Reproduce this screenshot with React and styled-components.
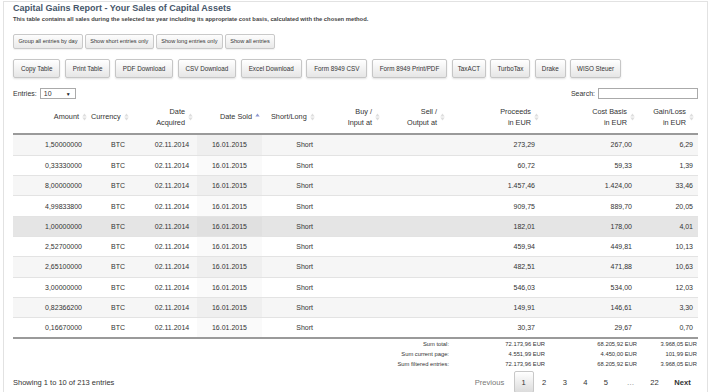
import React from "react";
import styled, { createGlobalStyle } from "styled-components";

const Global = createGlobalStyle`
  html, body { margin: 0; padding: 0; background: #fff; }
  body { font-family: "Liberation Sans", Arial, Helvetica, sans-serif; color: #333; }
  * { box-sizing: border-box; }
`;

const COLS = "77px 50px 57px 65px 68px 55px 65px 95px 95px 57px";

const Panel = styled.div`
  margin: 1px 2px 0 3px;
  min-height: 100vh;
  border: 1px solid #e2e2e2;
  border-bottom: none;
  padding: 0 9px;
`;

const Title = styled.h1`
  margin: 1px 0 0;
  font-size: 9px;
  line-height: 10px;
  font-weight: bold;
  color: #46566a;
`;

const Subtitle = styled.p`
  margin: 3px 0 0;
  font-size: 5.8px;
  line-height: 7px;
  font-weight: bold;
  color: #444;
`;

const FilterBar = styled.div`
  display: flex;
  gap: 2px;
  margin-top: 11px;
`;

const FilterButton = styled.button`
  height: 14.5px;
  padding: 0 4.4px;
  font-family: inherit;
  font-size: 5.6px;
  color: #333;
  background: linear-gradient(#fdfdfd, #e9e9e9);
  border: 1px solid #c9c9c9;
  border-radius: 2px;
  box-shadow: 0 1px 1px rgba(0,0,0,0.06);
`;

const ExportBar = styled.div`
  display: flex;
  gap: 4.4px;
  margin-top: 10px;
`;

const ExportButton = styled.button`
  height: 19px;
  padding: 0 ${(p) => p.$pad || 7}px;
  font-family: inherit;
  font-size: 6.3px;
  color: #333;
  background: linear-gradient(#ffffff, #e6e6e6);
  border: 1px solid #c6c6c6;
  border-radius: 2px;
  box-shadow: 0 1px 2px rgba(0,0,0,0.12);
`;

const Controls = styled.div`
  display: flex;
  justify-content: space-between;
  align-items: center;
  margin-top: 10px;
  height: 12px;
  font-size: 7px;
  color: #333;
`;

const Label = styled.label`
  display: flex;
  align-items: center;
  gap: 3px;
`;

const SelectBox = styled.div`
  width: 36px;
  height: 11px;
  border: 1px solid #aaa;
  background: #fff;
  display: flex;
  align-items: center;
  justify-content: space-between;
  padding: 0 4px 0 3px;
  font-size: 7px;
  span { font-size: 5px; color: #222; }
`;

const SearchInput = styled.input`
  width: 100px;
  height: 11px;
  border: 1px solid #aaa;
  padding: 0;
  margin: 0;
`;

const HeadRow = styled.div`
  display: grid;
  grid-template-columns: ${COLS};
  height: 33px;
  margin-top: 2px;
  border-bottom: 2px solid #9a9a9a;
`;

const HeadCell = styled.div`
  display: flex;
  align-items: center;
  justify-content: ${(p) => p.$just};
  padding: ${(p) => p.$pad};
  font-size: 7.3px;
  line-height: 11.5px;
  color: #333;
  text-align: right;
`;

const SortIcon = styled.svg`
  width: 5px;
  height: 8px;
  margin-left: 3px;
  flex: none;
`;

const Row = styled.div`
  display: grid;
  grid-template-columns: ${COLS};
  height: 20.3px;
  border-top: ${(p) => (p.$first ? "none" : "1px solid #e3e3e3")};
  background: ${(p) => p.$bg};
`;

const Cell = styled.div`
  display: flex;
  align-items: center;
  justify-content: ${(p) => p.$just};
  padding: ${(p) => p.$pad};
  font-size: 7px;
  color: #333;
  background: ${(p) => p.$bg || "transparent"};
  white-space: nowrap;
`;

const TableEnd = styled.div`
  border-top: 2px solid #9a9a9a;
`;

const SumRow = styled.div`
  display: grid;
  grid-template-columns: ${COLS};
  height: 10px;
  font-size: 5.8px;
  color: #333;
`;

const SumLabel = styled.div`
  grid-column: 1 / span 7;
  text-align: right;
  line-height: 10px;
  padding-right: 1px;
`;

const SumValue = styled.div`
  text-align: right;
  line-height: 10px;
  padding-right: ${(p) => p.$pad}px;
  white-space: nowrap;
`;

const BottomBar = styled.div`
  display: flex;
  justify-content: space-between;
  align-items: center;
  height: 24px;
  margin-top: 1px;
`;

const Info = styled.div`
  font-size: 7.5px;
  color: #333;
`;

const Pager = styled.div`
  display: flex;
  align-items: center;
  margin-right: -3px;
`;

const PageItem = styled.span`
  display: flex;
  align-items: center;
  justify-content: center;
  width: ${(p) => p.$w}px;
  height: 22px;
  font-size: 7.6px;
  color: ${(p) => (p.$muted ? "#777" : "#333")};
  font-weight: ${(p) => (p.$bold ? "bold" : "normal")};
  border: 1px solid ${(p) => (p.$current ? "#c8c8c8" : "transparent")};
  border-radius: 2px;
  background: ${(p) => (p.$current ? "linear-gradient(#fff, #dcdcdc)" : "transparent")};
`;

const columns = [
  { w: 77, head: ["Amount"], hJust: "flex-end", hPad: "0 3px 0 0", dJust: "flex-end", dPad: "0 8px 0 0" },
  { w: 50, head: ["Currency"], hJust: "flex-start", hPad: "0 0 0 1px", dJust: "center", dPad: "0 0 0 6px" },
  { w: 57, head: ["Date", "Acquired"], hJust: "flex-end", hPad: "0 4px 0 0", dJust: "center", dPad: "0 0 0 7px" },
  { w: 65, head: ["Date Sold"], sorted: true, hJust: "flex-end", hPad: "0 2px 0 0", dJust: "center", dPad: "0" },
  { w: 68, head: ["Short/Long"], hJust: "flex-start", hPad: "0 0 0 9px", dJust: "flex-end", dPad: "0 17px 0 0" },
  { w: 55, head: ["Buy /", "Input at"], hJust: "flex-end", hPad: "0 5px 0 0", dJust: "flex-end", dPad: "0 5px 0 0" },
  { w: 65, head: ["Sell /", "Output at"], hJust: "flex-end", hPad: "0 5px 0 0", dJust: "flex-end", dPad: "0 5px 0 0" },
  { w: 95, head: ["Proceeds", "in EUR"], hJust: "flex-end", hPad: "0 6px 0 0", dJust: "flex-end", dPad: "0 10px 0 0" },
  { w: 95, head: ["Cost Basis", "in EUR"], hJust: "flex-end", hPad: "0 5px 0 0", dJust: "flex-end", dPad: "0 8px 0 0" },
  { w: 57, head: ["Gain/Loss", "in EUR"], hJust: "flex-end", hPad: "0 3px 0 0", dJust: "flex-end", dPad: "0 4px 0 0" },
];

const data = [
  ["1,50000000", "273,29", "267,00", "6,29"],
  ["0,33330000", "60,72", "59,33", "1,39"],
  ["8,00000000", "1.457,46", "1.424,00", "33,46"],
  ["4,99833800", "909,75", "889,70", "20,05"],
  ["1,00000000", "182,01", "178,00", "4,01"],
  ["2,52700000", "459,94", "449,81", "10,13"],
  ["2,65100000", "482,51", "471,88", "10,63"],
  ["3,00000000", "546,03", "534,00", "12,03"],
  ["0,82366200", "149,91", "146,61", "3,30"],
  ["0,16670000", "30,37", "29,67", "0,70"],
];

const sums = [
  ["Sum total:", "72.173,96 EUR", "68.205,92 EUR", "3.968,05 EUR"],
  ["Sum current page:", "4.551,99 EUR", "4.450,00 EUR", "101,99 EUR"],
  ["Sum filtered entries:", "72.173,96 EUR", "68.205,92 EUR", "3.968,05 EUR"],
];

function Sort({ asc }) {
  return (
    <SortIcon viewBox="0 0 5 8">
      <polygon points="0.3,3.4 2.5,0.4 4.7,3.4" fill={asc ? "#8f98cf" : "#dedede"} />
      {!asc && <polygon points="0.3,4.6 4.7,4.6 2.5,7.6" fill="#dedede" />}
    </SortIcon>
  );
}

export default function App() {
  const filters = ["Group all entries by day", "Show short entries only", "Show long entries only", "Show all entries"];
  const exports = [
    ["Copy Table", 7], ["Print Table", 7], ["PDF Download", 7], ["CSV Download", 7], ["Excel Download", 7],
    ["Form 8949 CSV", 7], ["Form 8949 Print/PDF", 7], ["TaxACT", 5], ["TurboTax", 6], ["Drake", 6], ["WISO Steuer", 6],
  ];
  return (
    <>
      <Global />
      <Panel>
        <Title>Capital Gains Report - Your Sales of Capital Assets</Title>
        <Subtitle>
          This table contains all sales during the selected tax year including its appropriate cost basis, calculated with the chosen method.
        </Subtitle>
        <FilterBar>
          {filters.map((f) => (
            <FilterButton key={f}>{f}</FilterButton>
          ))}
        </FilterBar>
        <ExportBar>
          {exports.map(([e, p]) => (
            <ExportButton key={e} $pad={p}>{e}</ExportButton>
          ))}
        </ExportBar>
        <Controls>
          <Label>
            Entries:
            <SelectBox>
              10<span>▼</span>
            </SelectBox>
          </Label>
          <Label>
            Search:
            <SearchInput type="text" />
          </Label>
        </Controls>
        <HeadRow>
          {columns.map((c, i) => (
            <HeadCell key={i} $just={c.hJust} $pad={c.hPad}>
              <div>
                {c.head.map((l, j) => (
                  <div key={j}>{l}</div>
                ))}
              </div>
              <Sort asc={c.sorted} />
            </HeadCell>
          ))}
        </HeadRow>
        {data.map((r, i) => {
          const odd = i % 2 === 0;
          const hover = i === 4;
          const bg = hover ? "#e5e5e5" : odd ? "#f6f6f6" : "#fff";
          const sortedBg = hover ? "#e0e0e0" : odd ? "#efefef" : "#fafafa";
          const values = [r[0], "BTC", "02.11.2014", "16.01.2015", "Short", "", "", r[1], r[2], r[3]];
          return (
            <Row key={i} $first={i === 0} $bg={bg}>
              {columns.map((c, j) => (
                <Cell key={j} $just={c.dJust} $pad={c.dPad} $bg={c.sorted ? sortedBg : undefined}>
                  {values[j]}
                </Cell>
              ))}
            </Row>
          );
        })}
        <TableEnd />
        {sums.map((s) => (
          <SumRow key={s[0]}>
            <SumLabel>{s[0]}</SumLabel>
            <SumValue $pad={0}>{s[1]}</SumValue>
            <SumValue $pad={3}>{s[2]}</SumValue>
            <SumValue $pad={0}>{s[3]}</SumValue>
          </SumRow>
        ))}
        <BottomBar>
          <Info>Showing 1 to 10 of 213 entries</Info>
          <Pager>
            <PageItem $w={48} $muted>Previous</PageItem>
            <PageItem $w={20} $current>1</PageItem>
            <PageItem $w={21}>2</PageItem>
            <PageItem $w={20.5}>3</PageItem>
            <PageItem $w={20.5}>4</PageItem>
            <PageItem $w={20.5}>5</PageItem>
            <PageItem $w={29} $muted>…</PageItem>
            <PageItem $w={19}>22</PageItem>
            <PageItem $w={37} $bold>Next</PageItem>
          </Pager>
        </BottomBar>
      </Panel>
    </>
  );
}
